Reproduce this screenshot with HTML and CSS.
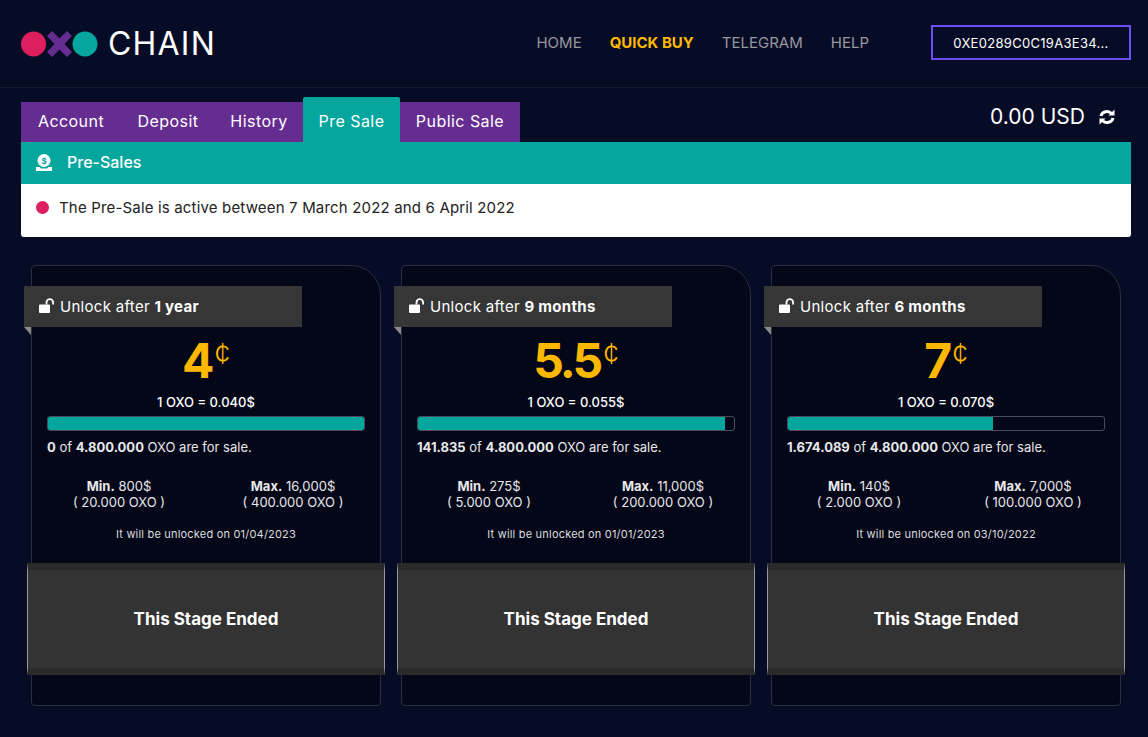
FILE: index.html
```html
<!DOCTYPE html>
<html lang="en">
<head>
<meta charset="utf-8">
<title>OXO Chain</title>
<link rel="stylesheet" href="styles.css">
</head>
<body>
<header class="topbar">
  <a class="logo">
    <svg class="logo-mark" width="77" height="26" viewBox="0 0 77 26"><circle cx="12.5" cy="13" r="12.5" fill="#dd1f5f"/><path d="M26 5l5-5 7.500 7.500L46 0l5 5-7.500 8 7.500 8-5 5-7.500-7.500L31 26l-5-5 7.500-8z" fill="#662d91"/><circle cx="64" cy="13" r="12.500" fill="#05a69e"/></svg>
    <span class="logo-text">CHAIN</span>
  </a>
  <nav class="nav">
    <a class="nav-link">HOME</a>
    <a class="nav-link nav-active">QUICK BUY</a>
    <a class="nav-link">TELEGRAM</a>
    <a class="nav-link">HELP</a>
  </nav>
  <button class="wallet">0XE0289C0C19A3E34...</button>
</header>
<main class="wrap">
  <div class="tabrow">
    <div class="tabs">
      <a class="tab">Account</a>
      <a class="tab">Deposit</a>
      <a class="tab">History</a>
      <a class="tab tab-active">Pre Sale</a>
      <a class="tab">Public Sale</a>
    </div>
    <div class="balance">
      <span>0.00 USD</span>
      <svg width="16" height="16" viewBox="0 0 16 16" fill="none" stroke="#fff" stroke-width="3"><path d="M2 7a6 5.500 0 0 1 10.500-2.500"/><path d="M14 9a6 5.500 0 0 1-10.500 2.500"/><path d="M15.500 0.500v6h-6z M0.500 15.500v-6h6z" fill="#fff" stroke="none"/></svg>
    </div>
  </div>
  <section class="panel">
    <div class="panel-head">
      <svg width="16" height="17" viewBox="0 0 16 17"><circle cx="8" cy="6.500" r="6.500" fill="#fff"/><path d="M0 13h3.500l1.500 1.500h6l1.500-1.500H16v4H0z" fill="#fff"/><text x="8" y="9.500" text-anchor="middle" class="coin-sign">$</text></svg>
      <span>Pre-Sales</span>
    </div>
    <div class="panel-body"><i class="dot"></i>The Pre-Sale is active between 7 March 2022 and 6 April 2022</div>
  </section>
  <div class="cards">
    <article class="card">
      <div class="ribbon"><svg class="lock" width="16" height="15" viewBox="0 0 16 15"><path d="M0 7.500a1 1 0 0 1 1-1h9a1 1 0 0 1 1 1V14a1 1 0 0 1-1 1H1a1 1 0 0 1-1-1z" fill="#fff"/><path d="M7.500 6.500V4.500a3.300 3.300 0 0 1 6.600 0V6.500" fill="none" stroke="#fff" stroke-width="1.800"/></svg>Unlock after&nbsp;<b>1 year</b></div>
      <div class="price">4<sup>¢</sup></div>
      <div class="rate">1 OXO = 0.040$</div>
      <div class="bar"><div class="bar-fill" style="width:100%"></div></div>
      <p class="sale"><b>0</b> of <b>4.800.000</b> OXO are for sale.</p>
      <div class="limits">
        <div><b>Min.</b> 800$<br>( 20.000 OXO )</div>
        <div><b>Max.</b> 16,000$<br>( 400.000 OXO )</div>
      </div>
      <p class="unlock">It will be unlocked on 01/04/2023</p>
      <div class="ended">This Stage Ended</div>
    </article>
    <article class="card">
      <div class="ribbon"><svg class="lock" width="16" height="15" viewBox="0 0 16 15"><path d="M0 7.500a1 1 0 0 1 1-1h9a1 1 0 0 1 1 1V14a1 1 0 0 1-1 1H1a1 1 0 0 1-1-1z" fill="#fff"/><path d="M7.500 6.500V4.500a3.300 3.300 0 0 1 6.600 0V6.500" fill="none" stroke="#fff" stroke-width="1.800"/></svg>Unlock after&nbsp;<b>9 months</b></div>
      <div class="price">5.5<sup>¢</sup></div>
      <div class="rate">1 OXO = 0.055$</div>
      <div class="bar"><div class="bar-fill" style="width:97%"></div></div>
      <p class="sale"><b>141.835</b> of <b>4.800.000</b> OXO are for sale.</p>
      <div class="limits">
        <div><b>Min.</b> 275$<br>( 5.000 OXO )</div>
        <div><b>Max.</b> 11,000$<br>( 200.000 OXO )</div>
      </div>
      <p class="unlock">It will be unlocked on 01/01/2023</p>
      <div class="ended">This Stage Ended</div>
    </article>
    <article class="card">
      <div class="ribbon"><svg class="lock" width="16" height="15" viewBox="0 0 16 15"><path d="M0 7.500a1 1 0 0 1 1-1h9a1 1 0 0 1 1 1V14a1 1 0 0 1-1 1H1a1 1 0 0 1-1-1z" fill="#fff"/><path d="M7.500 6.500V4.500a3.300 3.300 0 0 1 6.600 0V6.500" fill="none" stroke="#fff" stroke-width="1.800"/></svg>Unlock after&nbsp;<b>6 months</b></div>
      <div class="price">7<sup>¢</sup></div>
      <div class="rate">1 OXO = 0.070$</div>
      <div class="bar"><div class="bar-fill" style="width:65%"></div></div>
      <p class="sale"><b>1.674.089</b> of <b>4.800.000</b> OXO are for sale.</p>
      <div class="limits">
        <div><b>Min.</b> 140$<br>( 2.000 OXO )</div>
        <div><b>Max.</b> 7,000$<br>( 100.000 OXO )</div>
      </div>
      <p class="unlock">It will be unlocked on 03/10/2022</p>
      <div class="ended">This Stage Ended</div>
    </article>
  </div>
</main>
</body>
</html>
```
FILE: styles.css
```css
* { box-sizing: border-box; }
html, body { height: 100%; }
body {
  margin: 0;
  background: #070c26;
  color: #fff;
  font-family: Inter, "Liberation Sans", sans-serif;
  font-size: 13px;
  overflow: hidden;
}
.topbar {
  height: 88px;
  display: flex;
  align-items: center;
  padding: 0 17px 2px 21px;
  border-bottom: 1px solid #15182e;
}
.logo { display: flex; align-items: center; gap: 10px; margin-top: 2px; }
.logo-mark { display: block; }
.logo-text { font-size: 32px; font-weight: 400; line-height: 26px; letter-spacing: 1.200px; }
.nav { margin-left: auto; display: flex; gap: 28px; margin-right: 62px; margin-top: -1px; }
.nav-link { font-size: 15px; color: #96979f; }
.nav-active { color: #ffb800; font-weight: 700; }
.wallet {
  width: 200px;
  height: 35px;
  background: transparent;
  border: 2px solid #6a4df4;
  color: #fff;
  font: 400 13px Inter, "Liberation Sans", sans-serif;
  letter-spacing: .3px;
  padding: 0;
}
.wrap { padding: 9px 17px 0 21px; }
.tabrow { display: flex; justify-content: space-between; align-items: flex-start; height: 45px; }
.tabs { display: grid; grid-template-columns: 100px 94px 88px 97px 120px; align-items: end; height: 45px; }
.tab {
  height: 40px;
  display: flex;
  align-items: center;
  justify-content: center;
  padding: 0 0 3px;
  background: #662d91;
  font-size: 16px;
  letter-spacing: .45px;
}
.tab-active { height: 45px; background: #05a69e; padding: 4px 0 1px; border-radius: 2px 2px 0 0; }
.balance { display: flex; align-items: center; gap: 14px; padding: 7px 16px 0 0; font-size: 21px; }
.panel { background: #fff; border-radius: 0 0 3px 3px; }
.panel-head {
  height: 42px;
  background: #05a69e;
  display: flex;
  align-items: center;
  gap: 15px;
  padding: 0 0 2px 15px;
  font-size: 16px;
  font-weight: 500;
}
.coin-sign { font-size: 8px; font-weight: 700; fill: #05a69e; }
.panel-body {
  height: 53px;
  display: flex;
  align-items: center;
  color: #222;
  font-size: 15px;
  letter-spacing: .17px;
  padding: 0 0 7px 15px;
}
.dot { width: 13px; height: 13px; border-radius: 50%; background: #dd1f5f; margin-right: 10px; }
.cards { display: grid; grid-template-columns: repeat(3, 350px); gap: 20px; padding: 28px 0 0 10px; }
.card {
  height: 441px;
  background: #040718;
  border: 1px solid #2b2d42;
  border-radius: 4px 30px 4px 4px;
  padding: 20px 15px 0;
  text-align: center;
}
.ribbon {
  position: relative;
  width: 278px;
  height: 41px;
  margin-left: -23px;
  background: #363636;
  display: flex;
  align-items: center;
  padding: 0 0 1px 15px;
  font-size: 15px;
  letter-spacing: .3px;
}
.ribbon::after {
  content: "";
  position: absolute;
  left: 0;
  top: 100%;
  border-top: 8px solid #8a8a8a;
  border-left: 7px solid transparent;
}
.lock { margin-right: 5px; margin-top: -1px; }
.price {
  color: #ffb800;
  font-size: 48px;
  font-weight: 700;
  line-height: 60px;
  letter-spacing: -3px;
  margin-top: 4px;
}
.price sup { font-size: 28px; font-weight: 300; vertical-align: 14px; line-height: 0; letter-spacing: 0; margin-left: 3px; }
.rate { font-size: 13px; font-weight: 500; margin-top: 2px; line-height: 18px; }
.bar {
  height: 15px;
  margin-top: 5px;
  background: #040718;
  border: 1px solid #4a4c5e;
  border-radius: 3px;
  overflow: hidden;
}
.bar-fill { height: 100%; background: #05a69e; }
.sale { margin: 7px 0 0; text-align: left; font-size: 13px; line-height: 18px; color: #e8e8ea; }
.limits { display: grid; grid-template-columns: 1fr 1fr; margin: 22px -15px 0; font-size: 13px; line-height: 16px; color: #e8e8ea; }
.unlock { margin: 16px 0 0; font-size: 11px; line-height: 16px; color: #ddd; letter-spacing: .2px; }
.ended {
  height: 112px;
  margin: 21px -20px 0;
  background: #333;
  border-top: 7px solid #2a2a2a;
  border-bottom: 7px solid #2a2a2a;
  border-left: 1px solid #999;
  border-right: 1px solid #999;
  display: flex;
  align-items: center;
  justify-content: center;
  font-size: 17px;
  font-weight: 700;
}
```
